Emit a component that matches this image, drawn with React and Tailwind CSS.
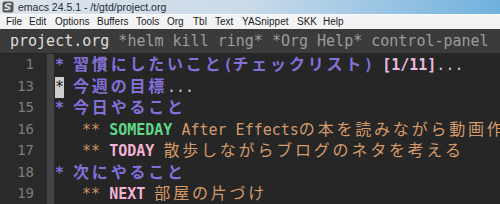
const J = ({ children }) => (
  <span className="text-[16px] tracking-[2.8px]">{children}</span>
);

const menus = [
  ["File", "w-[23px]"],
  ["Edit", "w-[26px]"],
  ["Options", "w-[42px]"],
  ["Buffers", "w-[39px]"],
  ["Tools", "w-[31px]"],
  ["Org", "w-[26px]"],
  ["Tbl", "w-[22px]"],
  ["Text", "w-[27px]"],
  ["YASnippet", "w-[55px]"],
  ["SKK", "w-[26px]"],
  ["Help", "w-[24px]"],
];

const numbers = ["1", "13", "15", "16", "17", "18", "19"];

const EmacsIcon = () => (
  <svg width="12" height="12" viewBox="0 0 12 12">
    <rect x="0.5" y="0.5" width="11" height="11" rx="2" fill="#5a5a5a" />
    <path
      d="M8.8 3.4C7.4 2.4 4 2.6 3.3 4.4c-.6 1.6 4.6 1 4.5 2.7-.1 1.6-3.5 1.7-4.9 1.3"
      fill="none"
      stroke="#f2f2f2"
      strokeWidth="1.4"
      strokeLinecap="round"
    />
  </svg>
);

export default function App() {
  return (
    <div className="w-[500px] h-[204px] overflow-hidden bg-[#262626] flex flex-col">
      {/* title bar */}
      <div className="h-[14px] shrink-0 flex items-center gap-[4px] pl-[2px] bg-gradient-to-r from-[#dde4ea] via-[#c9dae9] to-[#6fb1de]">
        <EmacsIcon />
        <span className="font-['Liberation_Sans',sans-serif] text-[10.5px] leading-none text-[#1e2a36]">
          emacs 24.5.1 - /t/gtd/project.org
        </span>
      </div>

      {/* menu bar */}
      <div className="h-[15px] shrink-0 flex items-center pl-[6px] bg-[#f2f3f5] border-t border-[#fafbfc] font-['Liberation_Sans',sans-serif] text-[10px] leading-none text-[#1a1a1a]">
        {menus.map(([m, w]) => (
          <span key={m} className={`${w} shrink-0`}>
            {m}
          </span>
        ))}
      </div>

      {/* tab line */}
      <div className="h-[24px] shrink-0 flex items-center pl-[10px] bg-[#3b3b3b] whitespace-pre font-['DejaVu_Sans_Mono',monospace] text-[15px] leading-none">
        <span className="text-[#dedede]">project.org</span>
        <span className="text-[#9c9c9c]"> *helm kill ring* *Org Help* control-panel</span>
      </div>

      {/* editor */}
      <div className="flex flex-1 pt-[1px] font-['DejaVu_Sans_Mono','Noto_Sans_CJK_JP',monospace] text-[15px]">
        <div className="w-[47px] shrink-0 bg-[#2a2a2a] pr-[13px] text-right text-[#7c7c7c] text-[14px]">
          {numbers.map((n) => (
            <div key={n} className="h-[21.5px] leading-[21.5px]">
              {n}
            </div>
          ))}
        </div>
        <div className="w-[7px] shrink-0 bg-[#444444]" />
        <div className="flex-1 min-w-0 overflow-hidden pl-[1px] whitespace-pre">
          <div className="h-[21.5px] leading-[21.5px] font-bold text-[#8470d8]">
            {"* "}
            <J>習慣にしたいこと</J>(<J>チェックリスト</J>){" "}
            <span className="text-[#e6bce0]">[1/11]</span>
            <span className="text-[#c8c8c8] font-normal">...</span>
          </div>
          <div className="h-[21.5px] leading-[21.5px] font-bold text-[#8470d8]">
            <span className="inline-block w-[9px] bg-[#cfcfcf] text-[#1a1a1a] font-normal">*</span>
            {" "}
            <J>今週の目標</J>
            <span className="text-[#c8c8c8] font-normal">...</span>
          </div>
          <div className="h-[21.5px] leading-[21.5px] font-bold text-[#8470d8]">
            {"* "}
            <J>今日やること</J>
          </div>
          <div className="h-[21.5px] leading-[21.5px] text-[#d49a6a]">
            <span className="text-[#c89062]">{"   ** "}</span>
            <span className="font-bold text-[#5fd787]">SOMEDAY</span>
            {" After Effects"}
            <J>の本を読みながら動画作</J>
          </div>
          <div className="h-[21.5px] leading-[21.5px] text-[#d49a6a]">
            <span className="text-[#c89062]">{"   ** "}</span>
            <span className="font-bold text-[#f5b3d4]">TODAY</span>{" "}
            <J>散歩しながらブログのネタを考える</J>
          </div>
          <div className="h-[21.5px] leading-[21.5px] font-bold text-[#8470d8]">
            {"* "}
            <J>次にやること</J>
          </div>
          <div className="h-[21.5px] leading-[21.5px] text-[#d49a6a]">
            <span className="text-[#c89062]">{"   ** "}</span>
            <span className="font-bold text-[#f5b3d4]">NEXT</span>{" "}
            <J>部屋の片づけ</J>
          </div>
        </div>
      </div>
    </div>
  );
}
